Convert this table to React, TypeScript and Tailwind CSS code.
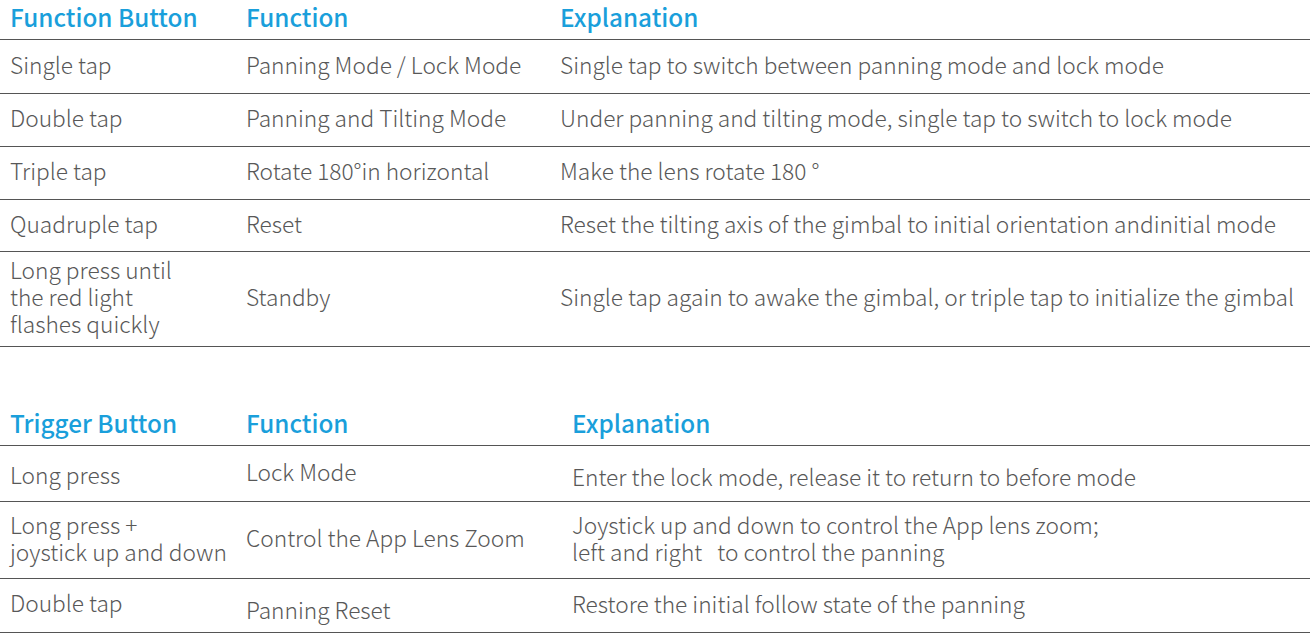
type Row = {
  button: string[];
  fn: string;
  explain: string[];
  fnPad?: string;
  btnPad?: string;
  exPad?: string;
  h: string;
};

const functionRows: Row[] = [
  { button: ["Single tap"], fn: "Panning Mode / Lock Mode", explain: ["Single tap to switch between panning mode and lock mode"], h: "h-[54px]" },
  { button: ["Double tap"], fn: "Panning and Tilting Mode", explain: ["Under panning and tilting mode, single tap to switch to lock mode"], h: "h-[53px]" },
  { button: ["Triple tap"], fn: "Rotate 180°in horizontal", explain: ["Make the lens rotate 180 °"], h: "h-[53px]" },
  { button: ["Quadruple tap"], fn: "Reset", explain: ["Reset the tilting axis of the gimbal to initial orientation andinitial mode"], h: "h-[52px]" },
  {
    button: ["Long press until", "the red light", "flashes quickly"],
    fn: "Standby",
    explain: ["Single tap again to awake the gimbal, or triple tap to initialize the gimbal"],
    h: "h-[95px]",
  },
];

const triggerRows: Row[] = [
  {
    button: ["Long press"],
    fn: "Lock Mode",
    explain: ["Enter the lock mode, release it to return to before mode"],
    btnPad: "pt-[6px]",
    exPad: "pt-[10px]",
    h: "h-[56px]",
  },
  {
    button: ["Long press +", "joystick up and down"],
    fn: "Control the App Lens Zoom",
    explain: ["Joystick up and down to control the App lens zoom;", "left and right \u00a0 to control the panning"],
    h: "h-[77px]",
  },
  { button: ["Double tap"], fn: "Panning Reset", explain: ["Restore the initial follow state of the panning"], btnPad: "pb-[2px]", fnPad: "pt-[12px]", h: "h-[54px]" },
];

function Table({
  title,
  rows,
  cols,
}: {
  title: string;
  rows: Row[];
  cols: string;
}) {
  return (
    <div className="w-[1310px]">
      <div className={`grid ${cols} h-[40px] items-start border-b-[1.5px] border-[#555] text-[24.3px] font-medium leading-[34px] text-[#1a9fdb]`}>
        <div className="pl-[10px]">{title}</div>
        <div>Function</div>
        <div>Explanation</div>
      </div>
      {rows.map((r) => (
        <div
          key={r.fn}
          className={`grid ${cols} ${r.h} items-center border-b-[1.5px] border-[#555] pb-[5px] text-[22.7px] font-light leading-[27px] text-[#585858]`}
        >
          <div className={`pl-[10px] ${r.btnPad ?? ""}`}>
            {r.button.map((l) => (
              <div key={l}>{l}</div>
            ))}
          </div>
          <div className={r.fnPad ?? ""}>{r.fn}</div>
          <div className={r.exPad ?? ""}>
            {r.explain.map((l) => (
              <div key={l}>{l}</div>
            ))}
          </div>
        </div>
      ))}
    </div>
  );
}

export default function App() {
  return (
    <div
      className="h-[640px] w-[1313px] overflow-hidden bg-white"
      style={{ fontFamily: '"Noto Sans CJK SC", "Noto Sans", sans-serif' }}
    >
      <Table title="Function Button" rows={functionRows} cols="grid-cols-[246px_314px_1fr]" />
      <div className="h-[59px]" />
      <Table title="Trigger Button" rows={triggerRows} cols="grid-cols-[246px_326px_1fr]" />
    </div>
  );
}
